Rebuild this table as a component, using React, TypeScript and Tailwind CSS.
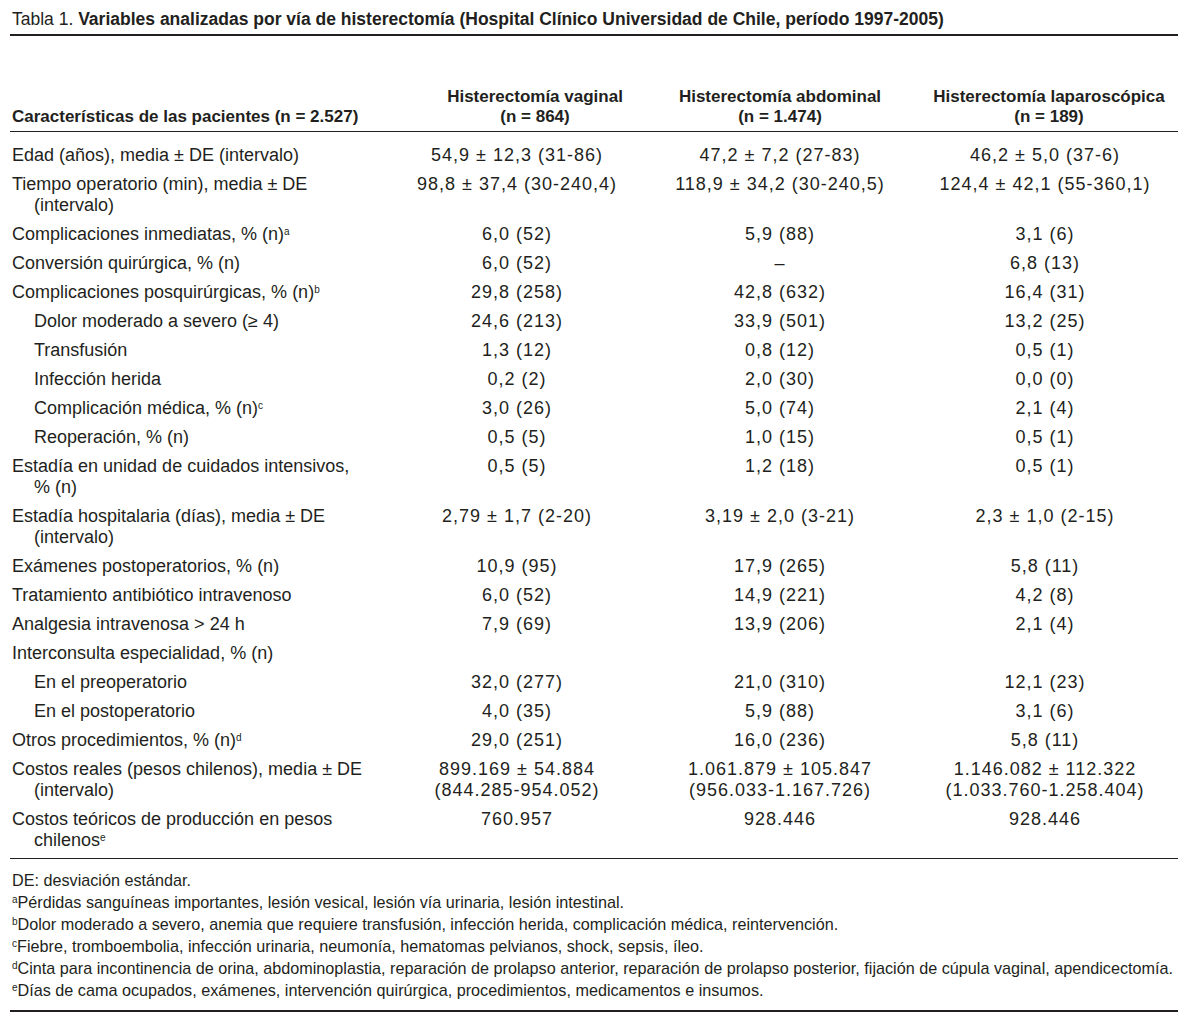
type Row = {
  label: string;
  sup?: string;
  cont?: string;
  contSup?: string;
  sub?: boolean;
  vals: [string[], string[], string[]];
};

const rows: Row[] = [
  { label: "Edad (años), media ± DE (intervalo)", vals: [["54,9 ± 12,3 (31-86)"], ["47,2 ± 7,2 (27-83)"], ["46,2 ± 5,0 (37-6)"]] },
  {
    label: "Tiempo operatorio (min), media ± DE",
    cont: "(intervalo)",
    vals: [["98,8 ± 37,4 (30-240,4)"], ["118,9 ± 34,2 (30-240,5)"], ["124,4 ± 42,1 (55-360,1)"]],
  },
  { label: "Complicaciones inmediatas, % (n)", sup: "a", vals: [["6,0 (52)"], ["5,9 (88)"], ["3,1 (6)"]] },
  { label: "Conversión quirúrgica, % (n)", vals: [["6,0 (52)"], ["–"], ["6,8 (13)"]] },
  { label: "Complicaciones posquirúrgicas, % (n)", sup: "b", vals: [["29,8 (258)"], ["42,8 (632)"], ["16,4 (31)"]] },
  { label: "Dolor moderado a severo (≥ 4)", sub: true, vals: [["24,6 (213)"], ["33,9 (501)"], ["13,2 (25)"]] },
  { label: "Transfusión", sub: true, vals: [["1,3 (12)"], ["0,8 (12)"], ["0,5 (1)"]] },
  { label: "Infección herida", sub: true, vals: [["0,2 (2)"], ["2,0 (30)"], ["0,0 (0)"]] },
  { label: "Complicación médica, % (n)", sup: "c", sub: true, vals: [["3,0 (26)"], ["5,0 (74)"], ["2,1 (4)"]] },
  { label: "Reoperación, % (n)", sub: true, vals: [["0,5 (5)"], ["1,0 (15)"], ["0,5 (1)"]] },
  {
    label: "Estadía en unidad de cuidados intensivos,",
    cont: "% (n)",
    vals: [["0,5 (5)"], ["1,2 (18)"], ["0,5 (1)"]],
  },
  {
    label: "Estadía hospitalaria (días), media ± DE",
    cont: "(intervalo)",
    vals: [["2,79 ± 1,7 (2-20)"], ["3,19 ± 2,0 (3-21)"], ["2,3 ± 1,0 (2-15)"]],
  },
  { label: "Exámenes postoperatorios, % (n)", vals: [["10,9 (95)"], ["17,9 (265)"], ["5,8 (11)"]] },
  { label: "Tratamiento antibiótico intravenoso", vals: [["6,0 (52)"], ["14,9 (221)"], ["4,2 (8)"]] },
  { label: "Analgesia intravenosa > 24 h", vals: [["7,9 (69)"], ["13,9 (206)"], ["2,1 (4)"]] },
  { label: "Interconsulta especialidad, % (n)", vals: [[], [], []] },
  { label: "En el preoperatorio", sub: true, vals: [["32,0 (277)"], ["21,0 (310)"], ["12,1 (23)"]] },
  { label: "En el postoperatorio", sub: true, vals: [["4,0 (35)"], ["5,9 (88)"], ["3,1 (6)"]] },
  { label: "Otros procedimientos, % (n)", sup: "d", vals: [["29,0 (251)"], ["16,0 (236)"], ["5,8 (11)"]] },
  {
    label: "Costos reales (pesos chilenos), media ± DE",
    cont: "(intervalo)",
    vals: [
      ["899.169 ± 54.884", "(844.285-954.052)"],
      ["1.061.879 ± 105.847", "(956.033-1.167.726)"],
      ["1.146.082 ± 112.322", "(1.033.760-1.258.404)"],
    ],
  },
  {
    label: "Costos teóricos de producción en pesos",
    cont: "chilenos",
    contSup: "e",
    vals: [["760.957"], ["928.446"], ["928.446"]],
  },
];

const notes: { sup?: string; text: string }[] = [
  { text: "DE: desviación estándar." },
  { sup: "a", text: "Pérdidas sanguíneas importantes, lesión vesical, lesión vía urinaria, lesión intestinal." },
  { sup: "b", text: "Dolor moderado a severo, anemia que requiere transfusión, infección herida, complicación médica, reintervención." },
  { sup: "c", text: "Fiebre, tromboembolia, infección urinaria, neumonía, hematomas pelvianos, shock, sepsis, íleo." },
  {
    sup: "d",
    text: "Cinta para incontinencia de orina, abdominoplastia, reparación de prolapso anterior, reparación de prolapso posterior, fijación de cúpula vaginal, apendicectomía.",
  },
  { sup: "e", text: "Días de cama ocupados, exámenes, intervención quirúrgica, procedimientos, medicamentos e insumos." },
];

function Sup({ children }: { children: string }) {
  return <sup className="text-[10px]">{children}</sup>;
}

export default function App() {
  return (
    <div className="h-[1032px] w-[1188px] bg-white px-[10px] pt-[9px] font-['Liberation_Sans',Arial,sans-serif] text-[#231f20]">
      <p className="pl-[2px] text-[17.5px] leading-[21px]">
        Tabla 1. <span className="font-bold">Variables analizadas por vía de histerectomía (Hospital Clínico Universidad de Chile, período 1997-2005)</span>
      </p>
      <div className="mt-[4px] border-t-2 border-[#231f20]" />

      <div className="mt-[51px] grid grid-cols-[400px_250px_240px_278px] items-end pb-[4px] text-[17px] font-bold leading-[20px]">
        <div className="pl-[2px]">Características de las pacientes (n = 2.527)</div>
        <div className="text-center">
          Histerectomía vaginal
          <br />
          (n = 864)
        </div>
        <div className="text-center">
          Histerectomía abdominal
          <br />
          (n = 1.474)
        </div>
        <div className="pl-[20px] text-center">
          Histerectomía laparoscópica
          <br />
          (n = 189)
        </div>
      </div>
      <div className="border-t border-[#231f20]" />

      <div className="pt-[9px] pb-[3px] text-[18px] leading-[21px]">
        {rows.map((row) => (
          <div key={row.label} className="grid grid-cols-[400px_250px_240px_278px] py-[4px]">
            <div className={row.sub ? "pl-[24px]" : "pl-[2px]"}>
              {row.label}
              {row.sup && <Sup>{row.sup}</Sup>}
              {row.cont && (
                <div className="pl-[22px]">
                  {row.cont}
                  {row.contSup && <Sup>{row.contSup}</Sup>}
                </div>
              )}
            </div>
            <div className="pr-[36px] text-center tracking-[1px]">
              {row.vals[0].map((v) => (
                <div key={v}>{v}</div>
              ))}
            </div>
            <div className="text-center tracking-[1px]">
              {row.vals[1].map((v) => (
                <div key={v}>{v}</div>
              ))}
            </div>
            <div className="pl-[12px] text-center tracking-[1px]">
              {row.vals[2].map((v) => (
                <div key={v}>{v}</div>
              ))}
            </div>
          </div>
        ))}
      </div>
      <div className="border-t border-[#231f20]" />

      <div className="pt-[10px] pb-[9px] pl-[2px] text-[16.2px] leading-[22px]">
        {notes.map((n) => (
          <div key={n.text}>
            {n.sup && <Sup>{n.sup}</Sup>}
            {n.text}
          </div>
        ))}
      </div>
      <div className="border-t-2 border-[#231f20]" />
    </div>
  );
}
